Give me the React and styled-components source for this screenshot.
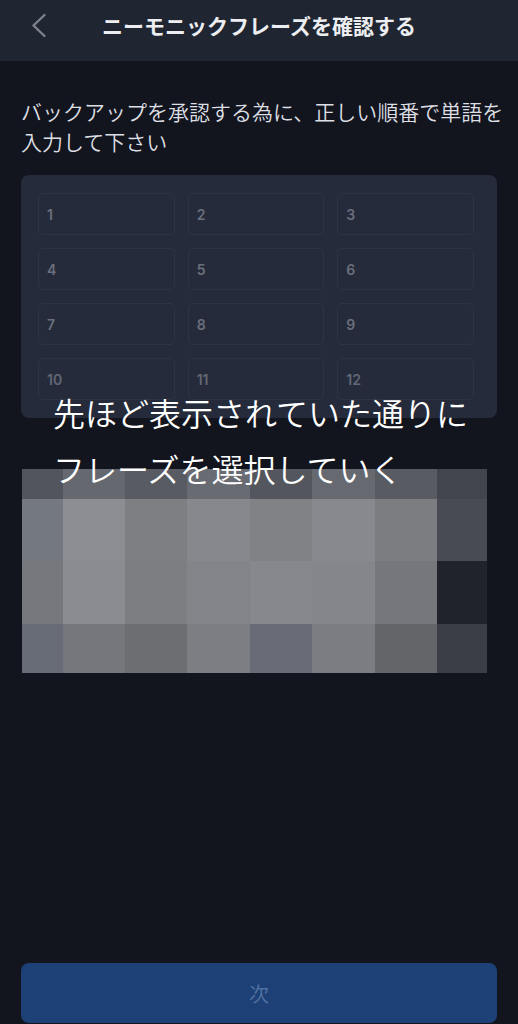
import React from "react";
import styled, { createGlobalStyle } from "styled-components";

const slots = Array.from({ length: 12 }, (_, i) => i + 1);

// hidden word list, row by row
const tiles = [
  "#53555d", "#66686f", "#595b63", "#696b73", "#54565e", "#676970", "#595b62", "#42454e",
  "#747881", "#8d8e93", "#7d7f83", "#87888d", "#818286", "#88898e", "#7c7d81", "#484b53",
  "#77787d", "#8b8c91", "#7c7e82", "#838489", "#87888d", "#85868b", "#76777c", "#20232c",
  "#686c77", "#76777c", "#6c6e72", "#7d7e83", "#696c76", "#7c7d82", "#646569", "#3b3e47",
];

const App = () => {
  return (
    <Page>
      <GlobalStyle />
      <Header>
        <BackButton type="button" aria-label="戻る">
          <svg width="16" height="24" viewBox="0 0 16 24" fill="none">
            <path
              d="M13.5 2 2.5 12.5 13.5 23"
              stroke="currentColor"
              strokeWidth="2.4"
              strokeLinecap="round"
              strokeLinejoin="round"
            />
          </svg>
        </BackButton>
        <Title>ニーモニックフレーズを確認する</Title>
      </Header>
      <Main>
        <Intro>
          バックアップを承認する為に、正しい順番で単語を入力して下さい
        </Intro>
        <Phrase>
          <SlotPanel>
            {slots.map((n) => (
              <Slot key={n} $dim={n > 9}>
                <span>{n}</span>
                <SlotInput type="text" autoComplete="off" />
              </Slot>
            ))}
          </SlotPanel>
          <Mosaic>
            {tiles.map((color, i) => (
              <Tile key={i} $color={color} />
            ))}
          </Mosaic>
          <Caption>
            先ほど表示されていた通りに
            <br />
            フレーズを選択していく
          </Caption>
        </Phrase>
        <NextButton type="button" disabled>
          次
        </NextButton>
      </Main>
    </Page>
  );
};

const GlobalStyle = createGlobalStyle`
  * {
    box-sizing: border-box;
  }
  body {
    margin: 0;
    background: #12151d;
    font-family: "Noto Sans CJK JP", sans-serif;
  }
`;

const Page = styled.div`
  display: flex;
  flex-direction: column;
  min-height: 100vh;
  background: #12151d;
`;

const Header = styled.header`
  display: grid;
  grid-template-columns: 40px 1fr 40px;
  align-items: center;
  padding: 9px 19px 20px;
  background: #202631;
`;

const BackButton = styled.button`
  display: flex;
  justify-content: center;
  padding: 0;
  border: 0;
  background: none;
  color: #7c828f;
`;

const Title = styled.h1`
  margin: 0;
  font-size: 21px;
  line-height: 32px;
  font-weight: 700;
  text-align: center;
  white-space: nowrap;
  color: #eceef2;
`;

const Main = styled.main`
  flex: 1;
  display: flex;
  flex-direction: column;
  padding: 35px 21px 1px;
`;

const Intro = styled.p`
  margin: 0 -12px 19px 0;
  font-size: 21px;
  line-height: 30px;
  font-weight: 350;
  color: #dddfe4;
`;

const Phrase = styled.section`
  position: relative;
  margin-bottom: 40px;
`;

const SlotPanel = styled.div`
  display: grid;
  grid-template-columns: repeat(3, minmax(0, 1fr));
  gap: 13px;
  padding: 18px 23px 18px 17px;
  border-radius: 8px;
  background: #252b3a;
`;

const Slot = styled.label`
  display: flex;
  align-items: center;
  gap: 8px;
  height: 42px;
  padding: 0 8px;
  border: 1px solid #2e3442;
  border-radius: 5px;
  font-family: Inter, sans-serif;
  font-size: 14px;
  font-weight: 600;
  color: ${({ $dim }) => ($dim ? "#626775" : "#6a6f7d")};
`;

const SlotInput = styled.input`
  flex: 1;
  width: 100%;
  min-width: 0;
  padding: 0;
  border: 0;
  outline: 0;
  background: none;
  font: inherit;
  color: #d9dbe0;
`;

const Mosaic = styled.div`
  display: grid;
  grid-template-columns: 41fr 62fr 62fr 63fr 62fr 63fr 62fr 50fr;
  grid-template-rows: 30px 62px 63px 49px;
  margin: 51px 10px 0 1px;
`;

const Tile = styled.div`
  background: ${({ $color }) => $color};
`;

// sits over the bottom of the slots and the top of the mosaic
const Caption = styled.p`
  position: absolute;
  top: 209px;
  left: 32px;
  margin: 0;
  font-size: 32px;
  line-height: 56px;
  font-weight: 350;
  white-space: nowrap;
  color: #fff;
`;

const NextButton = styled.button`
  margin-top: auto;
  height: 60px;
  border: 0;
  border-radius: 8px;
  background: #1d4076;
  font-family: inherit;
  font-size: 20px;
  color: #50709f;
`;

export default App;
